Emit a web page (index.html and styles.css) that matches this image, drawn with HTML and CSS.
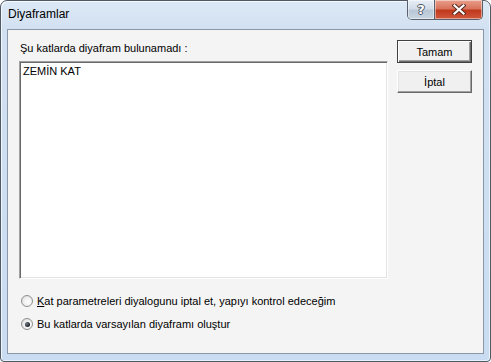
FILE: index.html
```html
<!DOCTYPE html>
<html>
<head>
<meta charset="utf-8">
<link rel="stylesheet" href="styles.css">
</head>
<body>
<div class="window">
  <div class="titlebar">
    <div class="title">Diyaframlar</div>
    <div class="caption-btns">
      <div class="cbtn help"><span>?</span></div>
      <div class="cbtn close">
        <svg width="14" height="11" viewBox="0 0 14 11">
          <path d="M2.5 1.5 L11.5 9.5 M11.5 1.5 L2.5 9.5" stroke="#5a2a20" stroke-width="4.2" stroke-linecap="square"/>
          <path d="M2.5 1.5 L11.5 9.5 M11.5 1.5 L2.5 9.5" stroke="#ffffff" stroke-width="2.2" stroke-linecap="square"/>
        </svg>
      </div>
    </div>
  </div>
  <div class="client">
    <div class="main">
      <div class="label">Şu katlarda diyafram bulunamadı :</div>
      <div class="listbox">
        <div class="item">ZEMİN KAT</div>
      </div>
      <div class="radios">
        <label class="radio"><span class="dot"></span><span><u>K</u>at parametreleri diyalogunu iptal et, yapıyı kontrol edeceğim</span></label>
        <label class="radio"><span class="dot checked"></span><span>Bu katlarda varsayılan diyaframı oluştur</span></label>
      </div>
    </div>
    <div class="side">
      <div class="btn default">Tamam</div>
      <div class="btn">İptal</div>
    </div>
  </div>
</div>
</body>
</html>
```
FILE: styles.css
```css
html, body {
  margin: 0;
  padding: 0;
  width: 491px;
  height: 362px;
  overflow: hidden;
  background: #ffffff;
}
.window {
  box-sizing: border-box;
  width: 491px;
  height: 362px;
  border: 1px solid #505a66;
  border-radius: 7px 7px 4px 4px;
  background: linear-gradient(180deg, #dce8f5 0px, #d2e1f2 28px, #c9dcf1 100%);
  box-shadow: inset 1px 1px 0 rgba(255,255,255,0.7), inset -1px -1px 0 rgba(255,255,255,0.6);
  padding: 0 6px 7px 6px;
  display: flex;
  flex-direction: column;
  font-family: "Liberation Sans", "DejaVu Sans Condensed", sans-serif;
}
.titlebar {
  height: 28px;
  display: flex;
  align-items: flex-start;
}
.title {
  flex: 1;
  padding: 5px 0 0 1px;
  font-family: "Liberation Sans", "Noto Sans", sans-serif;
  font-size: 12px;
  color: #000;
  line-height: 16px;
}
.caption-btns {
  display: flex;
  margin-top: -1px;
  margin-right: 1px;
  border: 1px solid #59616c;
  border-top: none;
  border-radius: 0 0 5px 5px;
  overflow: hidden;
  height: 19px;
}
.cbtn {
  display: flex;
  align-items: center;
  justify-content: center;
  box-shadow: inset 0 0 0 1px rgba(255,255,255,0.45);
}
.help {
  width: 26px;
  background: linear-gradient(180deg, #e8eef5 0%, #d3dde8 45%, #b9c7d6 55%, #c9d5e2 100%);
  border-right: 1px solid #59616c;
}
.help span {
  font-family: "DejaVu Sans", sans-serif;
  font-weight: bold;
  font-size: 13px;
  color: #fff;
  text-shadow: 1px 0 0 #4a5563, -1px 0 0 #4a5563, 0 1px 0 #4a5563, 0 -1px 0 #4a5563;
  line-height: 13px;
}
.close {
  width: 47px;
  background: linear-gradient(180deg, #e9a08c 0%, #d8735c 45%, #c1391d 55%, #d0573b 100%);
}
.client {
  flex: 1;
  border: 1px solid #8997a8;
  background: #f4f4f4;
  display: flex;
  font-size: 11px;
  color: #000;
}
.main {
  display: flex;
  flex-direction: column;
  padding: 12px 0 0 11px;
}
.label {
  line-height: 13px;
  padding-left: 1px;
  margin-bottom: 6px;
}
.listbox {
  box-sizing: border-box;
  width: 369px;
  height: 218px;
  background: #fff;
  border: 1px solid;
  border-color: #a0a0a0 #ffffff #ffffff #a0a0a0;
  box-shadow: inset 1px 1px 0 #696969, inset -1px -1px 0 #e3e3e3;
  padding: 3px 3px;
}
.item {
  line-height: 13px;
}
.radios {
  display: flex;
  flex-direction: column;
  gap: 7px;
  margin-top: 14px;
}
.radio {
  display: flex;
  align-items: center;
  gap: 4px;
  height: 16px;
  padding-left: 2px;
}
.dot {
  box-sizing: border-box;
  width: 12px;
  height: 12px;
  border-radius: 50%;
  border: 1px solid #8e8f8f;
  background: radial-gradient(circle at 60% 60%, #ffffff 0%, #f0f0f0 45%, #d4d4d4 100%);
  display: flex;
  align-items: center;
  justify-content: center;
}
.dot.checked::after {
  content: "";
  width: 5px;
  height: 5px;
  border-radius: 50%;
  background: radial-gradient(circle at 35% 35%, #6f7a86 0%, #1c2026 70%);
}
.side {
  display: flex;
  flex-direction: column;
  gap: 7px;
  padding: 10px 0 0 9px;
}
.btn {
  box-sizing: border-box;
  width: 75px;
  height: 23px;
  display: flex;
  align-items: center;
  justify-content: center;
  background: #f0f0f0;
  border: 1px solid;
  border-color: #ffffff #696969 #696969 #ffffff;
  box-shadow: inset -1px -1px 0 #a0a0a0, inset 1px 1px 0 #e3e3e3;
}
.btn.default {
  border: 1px solid #404040;
  box-shadow: inset 1px 1px 0 #ffffff, inset -1px -1px 0 #696969, inset -2px -2px 0 #a0a0a0;
}
```
